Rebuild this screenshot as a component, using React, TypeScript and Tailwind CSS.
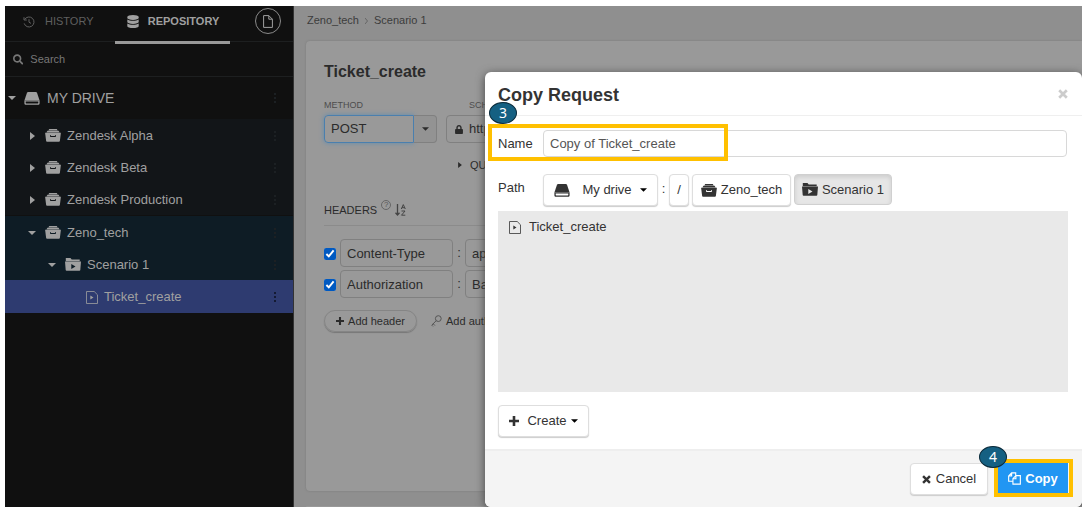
import { useState } from 'react';
import type { ReactNode } from 'react';
import { FaDatabase, FaLock, FaSearch } from 'react-icons/fa';
import clsx from 'clsx';

interface IconProps {
  className?: string;
}

interface TreeItemProps {
  icon: ReactNode;
  label: string;
  className?: string;
  expanded?: boolean;
  leaf?: boolean;
  active?: boolean;
}

const DRIVES = ['Zendesk Alpha', 'Zendesk Beta', 'Zendesk Production'];

const HEADERS = [
  { name: 'Content-Type', value: 'application/json' },
  { name: 'Authorization', value: 'Basic' },
];

function HistoryIcon({ className }: IconProps) {
  return (
    <svg viewBox="0 0 12 12" className={className} fill="none" stroke="currentColor">
      <path d="M1.6 3.6A5 5 0 1 1 1.2 7.4M1 1.2v2.8h2.8M6 3.2v3l2 1.2" />
    </svg>
  );
}

function PageIcon({ className }: IconProps) {
  return (
    <svg viewBox="0 0 10 13" className={className} fill="none" stroke="currentColor">
      <path d="M.6.6h5.2l3.6 3.6v8.2H.6zM5.8.6v3.6h3.6" />
    </svg>
  );
}

function DriveIcon({ className }: IconProps) {
  return (
    <svg viewBox="0 0 16 13" className={className} fill="currentColor">
      <path d="M4.2 0h7.6c.6 0 1 .3 1.2.8L15.6 8.4H.4L3 .8C3.2.3 3.6 0 4.2 0z" />
      <path
        fillRule="evenodd"
        d="M.4 8.400h15.200v2.800c0 1-.7 1.600-1.600 1.600H2c-.9 0-1.600-.6-1.600-1.600zM1.700 9.400v1.400c0 .4.200.6.600.6h11.400c.4 0 .6-.2.6-.6V9.400z"
      />
    </svg>
  );
}

function BoxIcon({ className }: IconProps) {
  return (
    <svg viewBox="0 0 16 13" className={className} fill="currentColor">
      <path d="M4.200 0h7.600l.9 1.400H3.300z" />
      <path d="M2.400 1.700h11.200l1 1.700H1.400z" />
      <path
        fillRule="evenodd"
        d="M.1 3.800h15.800l-1 7.900c-.1.700-.6 1.100-1.300 1.100H2.400c-.7 0-1.200-.4-1.300-1.100zM5 6.300v.7c0 .7.400 1.100 1.100 1.100h3.800c.7 0 1.100-.4 1.100-1.100v-.7h-1v.5c0 .2-.1.300-.3.300H6.300c-.2 0-.3-.1-.3-.3v-.5z"
      />
    </svg>
  );
}

function FolderPlayIcon({ className }: IconProps) {
  return (
    <svg viewBox="0 0 16 13" className={className} fill="currentColor">
      <path d="M.8 0h4.700l1.200 1.500h8v1.700H.8z" />
      <path
        fillRule="evenodd"
        d="M0 3.600h16l-.7 8.400c0 .5-.4.800-.9.800H1.600c-.5 0-.9-.3-.9-.8zM6.300 6v5l4.200-2.500z"
      />
    </svg>
  );
}

function RequestIcon({ className }: IconProps) {
  return (
    <svg viewBox="0 0 12 13" className={className}>
      <path d="M.5.500h7.700l3.300 3.300v8.700H.5z" fill="none" stroke="currentColor" strokeWidth=".8" />
      <path d="M4.300 4.500v4L7.500 6.500z" fill="currentColor" />
    </svg>
  );
}

function PlusIcon({ className }: IconProps) {
  return (
    <svg viewBox="0 0 10 10" className={className} fill="currentColor">
      <path d="M3.700 0h2.600v3.700H10v2.600H6.300V10H3.700V6.300H0V3.700h3.700z" />
    </svg>
  );
}

function CrossIcon({ className }: IconProps) {
  return (
    <svg viewBox="0 0 10 10" className={className} fill="none" stroke="currentColor" strokeWidth="2.700">
      <path d="M1.200 1.200l7.600 7.600M8.800 1.200 1.200 8.800" />
    </svg>
  );
}

function CopyIcon({ className }: IconProps) {
  return (
    <svg viewBox="0 0 14 14" className={className} fill="none" stroke="currentColor" strokeWidth="1.200">
      <path d="M5.300 10H.7V4.200L3.900.9h4.400v3M3.900.9v3.300H.7" />
      <path d="M8.500 3.900h4.800v9.200h-8V7.200zM8.500 3.900v3.300H5.300" />
    </svg>
  );
}

function KeyIcon({ className }: IconProps) {
  return (
    <svg viewBox="0 0 11 12" className={className} fill="none" stroke="currentColor">
      <circle cx="7.300" cy="3.600" r="2.900" />
      <path d="M5.200 5.700.8 10.200M2.200 8.800l1.700 1.700M.8 10.200l1.200 1.200" />
    </svg>
  );
}

function SortIcon({ className }: IconProps) {
  return (
    <svg viewBox="0 0 11 12" className={className} fill="none" stroke="currentColor">
      <path d="M2.500 0v11M.5 8.800l2 2.200 2-2.200" strokeWidth="1.300" />
      <path d="M6.300 5 8.300.6l2 4.400M7 3.700h2.600M6.500 7h3.500l-3.500 4.200h3.800" />
    </svg>
  );
}

function Caret({ className }: IconProps) {
  return (
    <svg viewBox="0 0 8 4" className={clsx('h-1 shrink-0', className)} fill="currentColor">
      <path d="M0 0h8L4 4z" />
    </svg>
  );
}

function CaretRight({ className }: IconProps) {
  return (
    <svg viewBox="0 0 5 8" className={clsx('shrink-0', className)} fill="currentColor">
      <path d="M0 0v8l5-4z" />
    </svg>
  );
}

function Dots({ className }: IconProps) {
  return (
    <svg viewBox="0 0 2 10" className={clsx('ml-auto mr-[17px] h-[10px] w-[2px]', className)} fill="currentColor">
      <path d="M0 0h2v2H0zM0 4h2v2H0zM0 8h2v2H0z" />
    </svg>
  );
}

function TreeItem({ icon, label, className, expanded, leaf, active }: TreeItemProps) {
  return (
    <button type="button" className={clsx('flex w-full items-center pt-px text-left', className)}>
      {!leaf && (
        <span className="flex w-4 shrink-0 items-center">
          {expanded ? <Caret className="-ml-px w-2" /> : <CaretRight className="ml-px h-2 w-[5px]" />}
        </span>
      )}
      {icon}
      <span>{label}</span>
      <Dots className={active ? 'text-[#141a33]' : 'text-[#1c2023]'} />
    </button>
  );
}

function Step({ value, className }: { value: number; className: string }) {
  return (
    <span
      className={clsx(
        'absolute z-10 flex h-[22px] w-7 items-center justify-center rounded-[50%] border border-[#0b2b3b] bg-[#156082] font-["Noto_Sans",sans-serif] text-sm text-white',
        className,
      )}
    >
      {value}
    </span>
  );
}

function Sidebar() {
  return (
    <aside className="w-[289px] shrink-0 border-r border-[#333] bg-[#101010] text-[#a0a0a0]">
      <nav className="flex h-9 border-b border-[#1d1f20] text-[11px]">
        <button type="button" className="flex w-[110px] items-center gap-[10px] pb-1 pl-[18px] text-[#5f5f5f]">
          <HistoryIcon className="h-3 w-3" />
          HISTORY
        </button>
        <button
          type="button"
          className="flex h-[38px] w-[115px] items-center justify-center gap-2 border-b-[3px] border-[#999] pb-1 font-bold"
        >
          <FaDatabase className="h-[13px] w-[14px]" />
          REPOSITORY
        </button>
        <button
          type="button"
          aria-label="New"
          className="ml-[25px] mt-[2px] flex h-[26px] w-[26px] items-center justify-center rounded-full border border-[#8a8a8a]"
        >
          <PageIcon className="h-[13px] w-[10px]" />
        </button>
      </nav>
      <label className="flex h-[35px] items-center gap-[7px] border-b border-[#1d1f20] pl-2 text-[#777]">
        <FaSearch className="h-[11px] w-[11px]" />
        <input
          aria-label="Search"
          placeholder="Search"
          className="w-full bg-transparent text-[11px] outline-none placeholder:text-[#777]"
        />
      </label>
      <button type="button" className="flex h-[42px] w-full items-center pl-[3px] text-sm">
        <Caret className="mr-2 w-2" />
        <DriveIcon className="mr-[7px] h-[13px] w-4" />
        MY DRIVE
        <Dots className="text-[#1c2023]" />
      </button>
      <div className="bg-[#121518] text-[13px]">
        {DRIVES.map((drive) => (
          <TreeItem
            key={drive}
            label={drive}
            className="h-8 pl-6"
            icon={<BoxIcon className="mr-[6px] h-[13px] w-4" />}
          />
        ))}
      </div>
      <div className="border-t border-[#101010] bg-[#0e1c25] text-[13px]">
        <TreeItem
          expanded
          label="Zeno_tech"
          className="h-8 pl-6"
          icon={<BoxIcon className="mr-[6px] h-[13px] w-4" />}
        />
        <TreeItem
          expanded
          label="Scenario 1"
          className="h-8 pl-11"
          icon={<FolderPlayIcon className="mr-[6px] h-[13px] w-4" />}
        />
        <TreeItem
          leaf
          active
          label="Ticket_create"
          className="h-[33px] bg-[#2e3b70] pl-[81px]"
          icon={<RequestIcon className="mr-[6px] h-[13px] w-3" />}
        />
      </div>
    </aside>
  );
}

function RequestEditor() {
  const [checked, setChecked] = useState(HEADERS.map(() => true));

  const toggle = (index: number) => {
    setChecked((prev) => prev.map((value, i) => (i === index ? !value : value)));
  };

  return (
    <main className="flex min-w-0 flex-1 flex-col overflow-hidden bg-[#8f8f8f] pl-3 text-[13px] text-[#2b2b2b]">
      <nav className="flex h-[35px] shrink-0 items-center gap-[6px] pb-[6px] pl-px text-[11px] text-[#3c3c3c]">
        <a href="#zeno">Zeno_tech</a>
        <svg viewBox="0 0 3 6" className="h-[6px] w-[3px]" fill="none" stroke="#666">
          <path d="M0 0l2.500 3L0 6" />
        </svg>
        <a href="#scenario">Scenario 1</a>
      </nav>

      <section className="h-[450px] shrink-0 rounded-l bg-[#999] px-[18px] pt-5 shadow-[0_0_2px_#777]">
        <h1 className="text-base font-bold leading-[22px]">Ticket_create</h1>

        <div className="mt-4 flex gap-[9px]">
          <div className="w-[113px]">
            <label htmlFor="method" className="block h-4 text-[9px] leading-3 text-[#4d4d4d]">
              METHOD
            </label>
            <div className="flex h-7">
              <input
                id="method"
                defaultValue="POST"
                className="w-[90px] rounded-l border border-[#4a7fae] bg-transparent px-[6px] shadow-[0_0_5px_#5f8bb0] outline-none"
              />
              <button
                type="button"
                aria-label="Choose method"
                className="flex flex-1 items-center justify-center rounded-r border border-l-0 border-[#808080] bg-[#939393]"
              >
                <Caret className="w-[7px]" />
              </button>
            </div>
          </div>
          <div className="flex-1">
            <label htmlFor="url" className="block h-4 pl-[23px] text-[9px] leading-3 text-[#4d4d4d]">
              SCHEME
            </label>
            <div className="flex h-7 items-center gap-[6px] rounded border border-[#808080] pl-2">
              <FaLock className="h-[9px] w-2 shrink-0" />
              <input id="url" defaultValue="https://" className="w-full bg-transparent outline-none" />
            </div>
          </div>
        </div>

        <button type="button" className="ml-[134px] mt-3 flex h-5 items-center gap-2 text-[11px]">
          <CaretRight className="h-[6px] w-1" />
          QUERY PARAMETERS
        </button>

        <div className="mt-[21px] flex h-[30px] gap-1 border-b border-[#8b8b8b] pt-[6px]">
          <h2 className="text-[11px] leading-4">HEADERS</h2>
          <span className="-mt-[2px] flex h-[10px] w-[10px] items-center justify-center rounded-full border border-[#666] text-[8px] text-[#555]">
            ?
          </span>
          <SortIcon className="mt-[2px] h-3 w-[11px] text-[#444]" />
        </div>

        <div className="mt-[13px] flex flex-col gap-[3px]">
          {HEADERS.map((header, index) => (
            <div key={header.name} className="flex h-7 items-center">
              <input
                type="checkbox"
                aria-label={`Enable ${header.name}`}
                checked={checked[index]}
                onChange={() => toggle(index)}
                className="mr-1 mt-[2px] h-3 w-3 shrink-0 accent-[#0059c1]"
              />
              <input
                aria-label="Header name"
                defaultValue={header.name}
                className="h-7 w-[113px] shrink-0 rounded border border-[#808080] bg-transparent px-[6px] outline-none"
              />
              <span className="w-3 text-center">:</span>
              <input
                aria-label="Header value"
                defaultValue={header.value}
                className="h-7 min-w-0 flex-1 rounded border border-[#808080] bg-transparent px-[6px] outline-none"
              />
            </div>
          ))}
        </div>

        <div className="mt-3 flex items-center gap-[14px] text-[11px]">
          <button
            type="button"
            className="flex h-[22px] w-[93px] items-center justify-center gap-1 rounded-full border border-[#858585] shadow-[0_1px_1px_#777]"
          >
            <PlusIcon className="h-2 w-2" />
            Add header
          </button>
          <button type="button" className="flex items-center gap-1">
            <KeyIcon className="h-3 w-[11px] text-[#555]" />
            Add authorization
          </button>
        </div>
      </section>
      <section className="mt-[15px] flex-1 rounded-tl bg-[#999]" />
    </main>
  );
}

const buttonClass =
  'flex h-8 items-center justify-center rounded border border-[#dedede] bg-white shadow-[0_1px_1px_#ccc]';

function CopyRequestDialog() {
  const [name, setName] = useState('Copy of Ticket_create');

  return (
    <div
      role="dialog"
      aria-label="Copy Request"
      className="absolute bottom-0 left-[480px] right-0 top-[66px] flex flex-col rounded-md bg-white text-[13px] text-[#333] shadow-[0_2px_10px_#444]"
    >
      <header className="flex h-11 shrink-0 items-center justify-between border-b border-[#efefef] pl-[13px] pr-[14px]">
        <h2 className="pt-[2px] text-lg font-bold leading-5">Copy Request</h2>
        <button type="button" aria-label="Close" className="text-[#ccc]">
          <CrossIcon className="h-[10px] w-[10px]" />
        </button>
      </header>

      <div className="flex flex-1 flex-col px-[13px] pt-[14px]">
        <div className="relative flex h-[27px] shrink-0 items-center">
          <label htmlFor="copy-name" className="w-[45px]">
            Name
          </label>
          <input
            id="copy-name"
            value={name}
            onChange={(e) => setName(e.target.value)}
            className="mr-[2px] h-[27px] min-w-0 flex-1 rounded border border-[#d8d8d8] px-[6px] text-[#555] outline-none"
          />
          <div className="pointer-events-none absolute -left-[10px] -top-[6px] h-[37px] w-[240px] border-4 border-[#ffc000]" />
          <Step value={3} className="-left-[9px] -top-7" />
        </div>

        <div className="mt-[17px] flex shrink-0">
          <span className="w-[45px] pt-1">Path</span>
          <button type="button" className={clsx(buttonClass, 'w-[115px]')}>
            <DriveIcon className="mr-3 h-[13px] w-4" />
            My drive
            <Caret className="ml-2 w-[7px] text-black" />
          </button>
          <span className="w-[11px] pt-[5px] text-center">:</span>
          <button type="button" className={clsx(buttonClass, 'w-5')}>
            /
          </button>
          <button type="button" className={clsx(buttonClass, 'ml-[3px] w-[99px] gap-1')}>
            <BoxIcon className="h-[13px] w-4" />
            Zeno_tech
          </button>
          <button
            type="button"
            className="ml-[3px] flex h-[31px] w-[98px] items-center justify-center gap-1 rounded border border-[#d0d0d0] bg-[#e6e6e6] shadow-[inset_0_2px_4px_#ccc]"
          >
            <FolderPlayIcon className="h-[13px] w-4" />
            Scenario 1
          </button>
        </div>

        <ul className="mr-px mt-[5px] h-[181px] shrink-0 bg-[#e9e9e9] pl-[11px] pt-1">
          <li className="flex h-6 items-center gap-2">
            <RequestIcon className="h-[13px] w-3" />
            Ticket_create
          </li>
        </ul>

        <button type="button" className={clsx(buttonClass, 'mt-[13px] w-[91px] shrink-0')}>
          <PlusIcon className="mr-2 h-[10px] w-[10px]" />
          Create
          <Caret className="ml-1 w-[7px] text-black" />
        </button>
      </div>

      <footer className="flex h-[58px] shrink-0 justify-end gap-[10px] rounded-b-md border-t-2 border-[#eee] bg-[#f4f4f4] pr-[14px] pt-3">
        <button type="button" className={clsx(buttonClass, 'w-[78px] gap-[5px]')}>
          <CrossIcon className="h-[9px] w-[9px]" />
          Cancel
        </button>
        <div className="relative">
          <button
            type="button"
            className="flex h-[31px] w-[70px] items-center justify-center gap-1 bg-[#2196f3] font-bold text-white"
          >
            <CopyIcon className="h-[13px] w-[13px]" />
            Copy
          </button>
          <div className="pointer-events-none absolute -left-1 -right-[5px] -top-1 h-[38px] border-4 border-[#ffc000]" />
          <Step value={4} className="-left-[19px] -top-[17px]" />
        </div>
      </footer>
    </div>
  );
}

export default function App() {
  return (
    <div className='flex min-h-screen bg-white px-[5px] pb-[3px] pt-[6px] font-["Liberation_Sans",Arial,sans-serif]'>
      <div className="relative flex min-w-0 flex-1 overflow-hidden">
        <Sidebar />
        <RequestEditor />
        <CopyRequestDialog />
      </div>
    </div>
  );
}
